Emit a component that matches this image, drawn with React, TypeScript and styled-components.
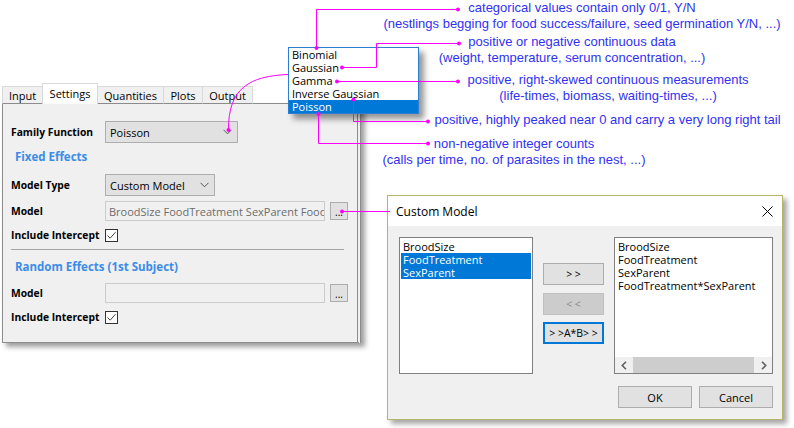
import React from "react";
import styled, { createGlobalStyle } from "styled-components";

const GlobalStyle = createGlobalStyle`
  html, body { margin: 0; padding: 0; background: #fff; }
  * { box-sizing: border-box; }
`;

const UI_FONT = `"Open Sans", "Noto Sans", "DejaVu Sans", sans-serif`;

const Canvas = styled.div`
  position: relative;
  width: 794px;
  height: 428px;
  overflow: hidden;
  background: #fff;
  font-family: ${UI_FONT};
  font-size: 11px;
  color: #000;
`;

/* ---------- Main tabbed window ---------- */
const TabWindow = styled.div`
  position: absolute;
  left: 2px;
  top: 84px;
  width: 359px;
  display: flex;
  flex-direction: column;
`;

const TabBar = styled.div`
  display: flex;
  align-items: flex-end;
  height: 20px;
  position: relative;
  z-index: 1;
  margin-bottom: -1px;
`;

const Tab = styled.div<{ $active?: boolean; $w: number }>`
  width: ${(p) => p.$w}px;
  height: ${(p) => (p.$active ? 21 : 18)}px;
  margin-left: -1px;
  &:first-child { margin-left: 0; }
  border: 1px solid #d9d9d9;
  border-bottom: ${(p) => (p.$active ? "none" : "1px solid #8c8c8c")};
  background: ${(p) => (p.$active ? "#fff" : "#f0f0f0")};
  display: flex;
  align-items: center;
  justify-content: center;
  padding-bottom: ${(p) => (p.$active ? 2 : 0)}px;
  position: relative;
  z-index: ${(p) => (p.$active ? 2 : 1)};
`;

const Panel = styled.div`
  height: 240px;
  background: #f0f0f0;
  border: 1px solid #8c8c8c;
  border-right: 4px double #8c8c8c;
  box-shadow: 4px 4px 5px rgba(0, 0, 0, 0.38);
  padding-left: 8px;
  display: flex;
  flex-direction: column;
`;

const Row = styled.div<{ $h: number; $mt: number }>`
  display: flex;
  align-items: center;
  height: ${(p) => p.$h}px;
  margin-top: ${(p) => p.$mt}px;
`;

const Label = styled.div`
  width: 94px;
  flex: none;
  font-weight: 700;
  font-size: 10.3px;
  white-space: nowrap;
`;

const Heading = styled.div`
  padding-left: 4px;
  color: #3b8ce8;
  font-weight: 700;
  font-size: 11.5px;
  white-space: nowrap;
`;

const Select = styled.div<{ $w: number }>`
  width: ${(p) => p.$w}px;
  height: 22px;
  background: #e1e1e1;
  border: 1px solid #adadad;
  display: flex;
  align-items: center;
  justify-content: space-between;
  padding: 0 5px 0 4px;
  font-size: 11px;
`;

const TextBox = styled.div`
  width: 220px;
  height: 20px;
  border: 1px solid #cccccc;
  background: #f0f0f0;
  color: #6d6d6d;
  padding-left: 3px;
  overflow: hidden;
  white-space: nowrap;
  display: flex;
  align-items: center;
`;

const DotsButton = styled.div`
  width: 18px;
  height: 18px;
  margin-left: 5px;
  background: #e1e1e1;
  border: 1px solid #adadad;
  display: flex;
  justify-content: center;
  align-items: flex-end;
  padding-bottom: 2px;
  font-size: 10px;
  line-height: 10px;
`;

const CheckBox = styled.div`
  width: 13px;
  height: 13px;
  border: 1px solid #333;
  background: #fff;
  display: flex;
`;

const Separator = styled.div<{ $mt: number }>`
  margin-top: ${(p) => p.$mt}px;
  width: 333px;
  height: 1px;
  background: #a6a6a6;
`;

/* ---------- Drop-down popup ---------- */
const Popup = styled.div`
  position: absolute;
  left: 288px;
  top: 47px;
  width: 131px;
  border: 1px solid #2a7fd0;
  background: #fff;
  box-shadow: 5px 5px 6px rgba(0, 0, 0, 0.42);
  z-index: 3;
`;

const PopupItem = styled.div<{ $sel?: boolean }>`
  height: 13px;
  line-height: 13px;
  padding-left: 3px;
  font-size: 11px;
  white-space: nowrap;
  background: ${(p) => (p.$sel ? "#0078d7" : "transparent")};
  color: ${(p) => (p.$sel ? "#fff" : "#000")};
`;

/* ---------- Custom Model dialog ---------- */
const Dialog = styled.div`
  position: absolute;
  left: 387px;
  top: 195px;
  width: 396px;
  height: 225px;
  border: 1px solid #b5b56a;
  background: #f0f0f0;
  box-shadow: 4px 4px 5px rgba(0, 0, 0, 0.35);
  display: flex;
  flex-direction: column;
  z-index: 2;
`;

const TitleBar = styled.div`
  height: 30px;
  flex: none;
  background: #fff;
  display: flex;
  align-items: center;
  justify-content: space-between;
  padding: 0 9px 0 8px;
  font-size: 12px;
`;

const DialogBody = styled.div`
  display: grid;
  grid-template-columns: 134px 61px 159px;
  grid-template-rows: 137px 22px;
  column-gap: 10px;
  row-gap: 12px;
  padding: 11px 9px 11px 11px;
`;

const ListBox = styled.div`
  background: #fff;
  border: 1px solid #7f7f7f;
  display: flex;
  flex-direction: column;
  overflow: hidden;
`;

const ListItems = styled.div`
  flex: 1;
  padding: 2px 1px;
`;

const ListItem = styled.div<{ $sel?: boolean }>`
  height: 13px;
  line-height: 13px;
  padding-left: 2px;
  white-space: nowrap;
  font-size: 11px;
  background: ${(p) => (p.$sel ? "#0078d7" : "transparent")};
  color: ${(p) => (p.$sel ? "#fff" : "#000")};
`;

const HScroll = styled.div`
  height: 16px;
  flex: none;
  background: #f0f0f0;
  display: flex;
  align-items: stretch;
`;

const ScrollArrow = styled.div`
  width: 17px;
  flex: none;
  display: flex;
  align-items: center;
  justify-content: center;
`;

const ScrollThumb = styled.div`
  flex: 1;
  margin: 0 1px;
  background: #cdcdcd;
`;

const ButtonColumn = styled.div`
  display: flex;
  flex-direction: column;
  gap: 7.5px;
  padding-top: 26px;
`;

const Btn = styled.div<{ $disabled?: boolean; $focus?: boolean }>`
  height: 22px;
  display: flex;
  align-items: center;
  justify-content: center;
  font-size: 10.5px;
  white-space: nowrap;
  background: ${(p) => (p.$disabled ? "#cccccc" : "#e1e1e1")};
  color: ${(p) => (p.$disabled ? "#8a8a8a" : "#000")};
  border: ${(p) =>
    p.$focus ? "2px solid #0078d7" : p.$disabled ? "1px solid #bfbfbf" : "1px solid #adadad"};
`;

const Footer = styled.div`
  grid-column: 1 / -1;
  display: flex;
  justify-content: flex-end;
  gap: 7px;
`;

const FooterBtn = styled.div`
  width: 74px;
  height: 22px;
  background: #e1e1e1;
  border: 1px solid #adadad;
  display: flex;
  align-items: center;
  justify-content: center;
  font-size: 11px;
`;

/* ---------- Annotations ---------- */
const Callout = styled.div<{ $cx: number; $top: number }>`
  position: absolute;
  left: ${(p) => p.$cx}px;
  top: ${(p) => p.$top}px;
  transform: translateX(-50%);
  font-family: "Liberation Sans", Arial, sans-serif;
  font-size: 13px;
  line-height: 16px;
  color: #3131f5;
  text-align: center;
  white-space: nowrap;
  z-index: 4;
`;

const Connectors = styled.svg`
  position: absolute;
  left: 0;
  top: 0;
  width: 794px;
  height: 428px;
  pointer-events: none;
  z-index: 5;
`;

const Chevron = () => (
  <svg width="9" height="6" viewBox="0 0 9 6">
    <path d="M0.5 0.8 L4.5 4.8 L8.5 0.8" fill="none" stroke="#555" strokeWidth="1" />
  </svg>
);

const Check = () => (
  <svg width="11" height="11" viewBox="0 0 11 11">
    <path d="M1.5 5.5 L4.2 8.2 L9.5 2.2" fill="none" stroke="#444" strokeWidth="1" />
  </svg>
);

const CloseX = () => (
  <svg width="11" height="11" viewBox="0 0 11 11">
    <path d="M0.5 0.5 L10.5 10.5 M10.5 0.5 L0.5 10.5" stroke="#000" strokeWidth="1" />
  </svg>
);

const ArrowL = () => (
  <svg width="6" height="9" viewBox="0 0 6 9">
    <path d="M5 0.8 L1.3 4.5 L5 8.2" fill="none" stroke="#606060" strokeWidth="1.6" />
  </svg>
);
const ArrowR = () => (
  <svg width="6" height="9" viewBox="0 0 6 9">
    <path d="M1 0.8 L4.7 4.5 L1 8.2" fill="none" stroke="#606060" strokeWidth="1.6" />
  </svg>
);

const MAGENTA = "#ff00ff";

const Dot = ({ x, y }: { x: number; y: number }) => <circle cx={x} cy={y} r={2} fill={MAGENTA} />;

export default function App() {
  const tabs: { label: string; w: number; active?: boolean }[] = [
    { label: "Input", w: 41 },
    { label: "Settings", w: 56, active: true },
    { label: "Quantities", w: 67 },
    { label: "Plots", w: 40 },
    { label: "Output", w: 51 },
  ];
  const families = ["Binomial", "Gaussian", "Gamma", "Inverse Gaussian", "Poisson"];

  return (
    <>
      <GlobalStyle />
      <Canvas>
        <TabWindow>
          <TabBar>
            {tabs.map((t) => (
              <Tab key={t.label} $w={t.w} $active={t.active}>
                {t.label}
              </Tab>
            ))}
          </TabBar>
          <Panel>
            <Row $h={22} $mt={17}>
              <Label>Family Function</Label>
              <Select $w={133}>
                <span>Poisson</span>
                <Chevron />
              </Select>
            </Row>
            <Row $h={18} $mt={4}>
              <Heading>Fixed Effects</Heading>
            </Row>
            <Row $h={22} $mt={9}>
              <Label>Model Type</Label>
              <Select $w={110}>
                <span>Custom Model</span>
                <Chevron />
              </Select>
            </Row>
            <Row $h={20} $mt={5}>
              <Label>Model</Label>
              <TextBox>BroodSize FoodTreatment SexParent FoodTreatment*SexParent</TextBox>
              <DotsButton>...</DotsButton>
            </Row>
            <Row $h={14} $mt={7}>
              <Label>Include Intercept</Label>
              <CheckBox>
                <Check />
              </CheckBox>
            </Row>
            <Separator $mt={7} />
            <Row $h={18} $mt={7}>
              <Heading>Random Effects (1st Subject)</Heading>
            </Row>
            <Row $h={20} $mt={8}>
              <Label>Model</Label>
              <TextBox />
              <DotsButton>...</DotsButton>
            </Row>
            <Row $h={14} $mt={7}>
              <Label>Include Intercept</Label>
              <CheckBox>
                <Check />
              </CheckBox>
            </Row>
          </Panel>
        </TabWindow>

        <Popup>
          {families.map((f) => (
            <PopupItem key={f} $sel={f === "Poisson"}>
              {f}
            </PopupItem>
          ))}
        </Popup>

        <Dialog>
          <TitleBar>
            <span>Custom Model</span>
            <CloseX />
          </TitleBar>
          <DialogBody>
            <ListBox>
              <ListItems>
                <ListItem>BroodSize</ListItem>
                <ListItem $sel>FoodTreatment</ListItem>
                <ListItem $sel>SexParent</ListItem>
              </ListItems>
            </ListBox>
            <ButtonColumn>
              <Btn>&gt; &gt;</Btn>
              <Btn $disabled>&lt; &lt;</Btn>
              <Btn $focus>&gt; &gt;A*B&gt; &gt;</Btn>
            </ButtonColumn>
            <ListBox>
              <ListItems>
                <ListItem>BroodSize</ListItem>
                <ListItem>FoodTreatment</ListItem>
                <ListItem>SexParent</ListItem>
                <ListItem>FoodTreatment*SexParent</ListItem>
              </ListItems>
              <HScroll>
                <ScrollArrow>
                  <ArrowL />
                </ScrollArrow>
                <ScrollThumb />
                <ScrollArrow>
                  <ArrowR />
                </ScrollArrow>
              </HScroll>
            </ListBox>
            <Footer>
              <FooterBtn>OK</FooterBtn>
              <FooterBtn>Cancel</FooterBtn>
            </Footer>
          </DialogBody>
        </Dialog>

        <Callout $cx={582} $top={0}>
          categorical values contain only 0/1, Y/N
          <br />
          (nestlings begging for food success/failure, seed germination Y/N, ...)
        </Callout>
        <Callout $cx={572} $top={34}>
          positive or negative continuous data
          <br />
          (weight, temperature, serum concentration, ...)
        </Callout>
        <Callout $cx={608} $top={72}>
          positive, right-skewed continuous measurements
          <br />
          (life-times, biomass, waiting-times, ...)
        </Callout>
        <Callout $cx={607.5} $top={112}>
          positive, highly peaked near 0 and carry a very long right tail
        </Callout>
        <Callout $cx={514} $top={136}>
          non-negative integer counts
          <br />
          (calls per time, no. of parasites in the nest, ...)
        </Callout>

        <Connectors viewBox="0 0 794 428">
          <g fill="none" stroke={MAGENTA} strokeWidth={1}>
            <path d="M316.5 48 V9.5 H458" />
            <path d="M342 67.5 H376.5 V43.5 H459" />
            <path d="M337 81.5 H458" />
            <path d="M353.5 99.5 V121.5 H428" />
            <path d="M318.5 114 V143.5 H428" />
            <path d="M288 74.5 C250 76 228 88 228.5 130" />
            <path d="M342 211.5 H390" />
          </g>
          <Dot x={316.5} y={48} />
          <Dot x={458} y={9.5} />
          <Dot x={342} y={67.5} />
          <Dot x={459} y={43.5} />
          <Dot x={337} y={81.5} />
          <Dot x={458} y={81.5} />
          <Dot x={353.5} y={99.5} />
          <Dot x={428} y={121.5} />
          <Dot x={318.5} y={114} />
          <Dot x={428} y={143.5} />
          <Dot x={228.5} y={130} />
          <Dot x={342} y={211.5} />
        </Connectors>
      </Canvas>
    </>
  );
}
